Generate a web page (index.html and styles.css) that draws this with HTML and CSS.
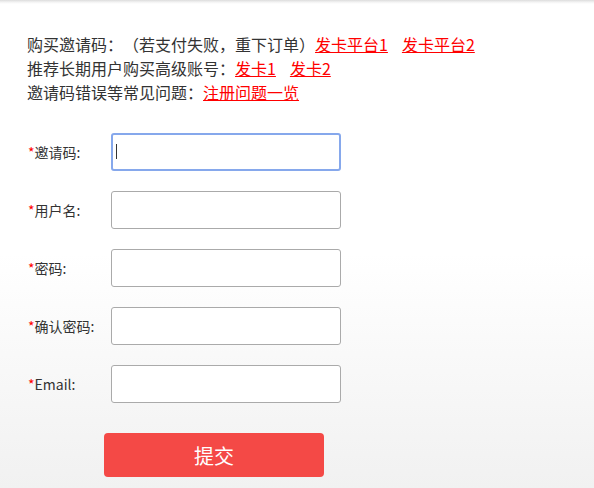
FILE: index.html
```html
<!DOCTYPE html>
<html lang="zh-cn">

<head>
<meta charset="utf-8">
<title>注册</title>
<link rel="stylesheet" href="styles.css">
</head>

<body>

<div class="page">
    <div class="notice">
        <p>购买邀请码：（若支付失败，重下订单）<a href="#">发卡平台1</a><a class="next" href="#">发卡平台2</a></p>
        <p>推荐长期用户购买高级账号：<a href="#">发卡1</a><a class="next" href="#">发卡2</a></p>
        <p>邀请码错误等常见问题：<a href="#">注册问题一览</a></p>
    </div>

    <form class="regForm">
        <div class="row">
            <label><span class="req">*</span>邀请码:</label>
            <div class="field">
                <input class="active" type="text"/>
                <span class="caret"></span>
            </div>
        </div>
        <div class="row">
            <label><span class="req">*</span>用户名:</label>
            <input type="text"/>
        </div>
        <div class="row">
            <label><span class="req">*</span>密码:</label>
            <input type="password"/>
        </div>
        <div class="row">
            <label><span class="req">*</span>确认密码:</label>
            <input type="password"/>
        </div>
        <div class="row">
            <label><span class="req">*</span>Email:</label>
            <input type="text"/>
        </div>
        <button class="submitBtn" type="button">提交</button>
    </form>
</div>

</body>

</html>
```

FILE: styles.css
```css
html, body {
    height: 100%;
}
body {
    margin: 0;
    font-family: "Noto Sans CJK SC", "Noto Sans", sans-serif;
    color: #333;
    text-spacing-trim: space-all;
    background:
        linear-gradient(to bottom, #dcdcdc 0, #f2f2f2 2px, #fff 4px) top / 100% 4px no-repeat,
        linear-gradient(to bottom, #fff 0, #fff 52%, #f1f1f1 100%);
}
.page {
    padding: 32px 0 0 27px;
}
.notice p {
    margin: 0;
    font-size: 16px;
    line-height: 24px;
}
.notice a {
    color: #f00;
    text-decoration: underline;
}
.notice a.next {
    margin-left: 14px;
}
.regForm {
    margin-top: 29px;
}
.row {
    display: flex;
    align-items: center;
    height: 38px;
    margin-bottom: 20px;
}
.row label {
    width: 83px;
    padding-left: 1px;
    font-size: 14px;
    color: #333;
}
.req {
    color: #f00;
}
.field {
    position: relative;
    display: flex;
}
.row input {
    box-sizing: border-box;
    width: 230px;
    height: 38px;
    border: 1px solid #aaa;
    border-radius: 3px;
    background: #fff;
    padding: 0 6px;
    font-size: 14px;
    outline: none;
}
.row input.active {
    border: 2px solid #86a8ec;
}
.caret {
    position: absolute;
    left: 5px;
    top: 11px;
    width: 1px;
    height: 15px;
    background: #333;
}
.submitBtn {
    display: block;
    margin: 30px 0 0 77px;
    width: 220px;
    height: 44px;
    border: none;
    border-radius: 4px;
    background-color: #f44946;
    color: #fff;
    font-family: "Noto Sans CJK SC", sans-serif;
    font-size: 20px;
}
```
